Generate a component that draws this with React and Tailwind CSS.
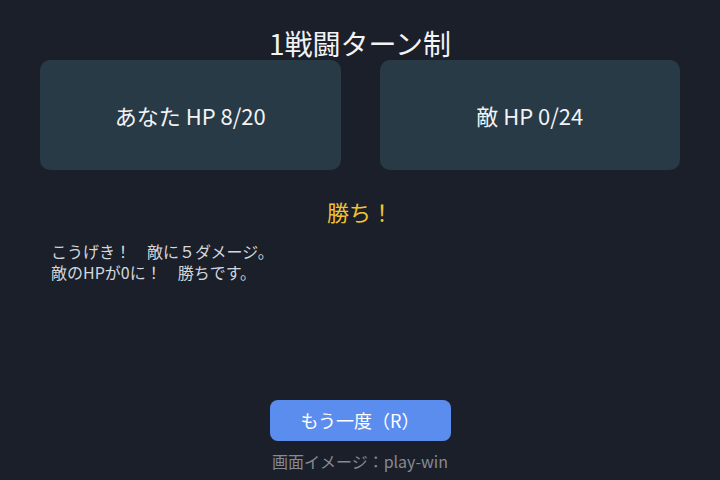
import React from 'react';

const FONT = '"Noto Sans CJK JP", "Noto Sans", sans-serif';

const log = ['こうげき！　敵に５ダメージ。', '敵のHPが0に！　勝ちです。'];

const HpCard = ({ label }) => (
  <div className="flex-1 h-[110px] rounded-[10px] bg-[#283a45] flex items-center justify-center">
    <span className="text-[22px] text-[#f1f3f5]">{label}</span>
  </div>
);

export default function App() {
  return (
    <div
      className="w-[720px] h-[480px] bg-[#1b1f29] flex flex-col px-10 overflow-hidden"
      style={{ fontFamily: FONT }}
    >
      <h1 className="pt-[26px] text-center text-[28px] leading-[34px] text-[#f1f3f5] font-normal">
        1戦闘ターン制
      </h1>

      <div className="flex gap-[39px]">
        <HpCard label="あなた HP 8/20" />
        <HpCard label="敵 HP 0/24" />
      </div>

      <p className="mt-[27px] text-center text-[22px] leading-[28px] text-[#f1c232]">勝ち！</p>

      <div className="mt-[16px] pl-[11px] text-[16px] leading-[21px] text-[#d3d7de]">
        {log.map((line, i) => (
          <div key={i}>{line}</div>
        ))}
      </div>

      <div className="mt-auto pb-[9px] flex flex-col items-center">
        <button className="w-[181px] h-[41px] rounded-[8px] bg-[#5b8def] text-white text-[18px]">
          もう一度（R）
        </button>
        <p className="mt-[10px] text-[16px] leading-[20px] text-[#858a94]">画面イメージ：play-win</p>
      </div>
    </div>
  );
}
